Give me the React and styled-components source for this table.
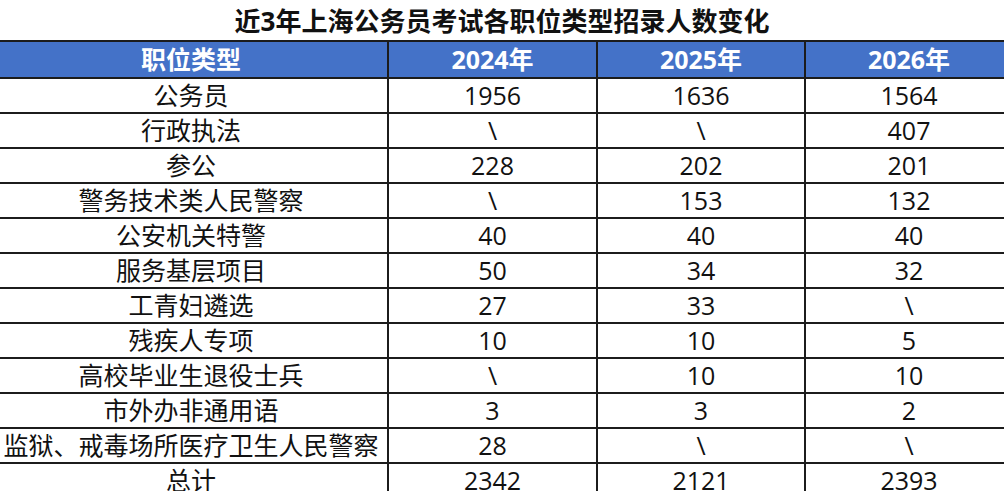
import React from "react";
import styled, { createGlobalStyle } from "styled-components";

const BLUE = "#4472C8";
const LINE = "#1c1c1c";
const FONT = `"Open Sans", "Noto Sans CJK SC", sans-serif`;

const YEARS = ["2024年", "2025年", "2026年"];
const WIDTHS = [394, 209, 208, 208];

const ROWS = [
  ["公务员", "1956", "1636", "1564"],
  ["行政执法", "\\", "\\", "407"],
  ["参公", "228", "202", "201"],
  ["警务技术类人民警察", "\\", "153", "132"],
  ["公安机关特警", "40", "40", "40"],
  ["服务基层项目", "50", "34", "32"],
  ["工青妇遴选", "27", "33", "\\"],
  ["残疾人专项", "10", "10", "5"],
  ["高校毕业生退役士兵", "\\", "10", "10"],
  ["市外办非通用语", "3", "3", "2"],
  ["监狱、戒毒场所医疗卫生人民警察", "28", "\\", "\\"],
  ["总计", "2342", "2121", "2393"],
];

const GlobalStyle = createGlobalStyle`
  html, body {
    margin: 0;
    padding: 0;
    background: #fff;
    overflow: hidden;
  }
  body {
    font-family: ${FONT};
    color: #111;
  }
`;

function App() {
  return (
    <>
      <GlobalStyle />
      <Page>
        <Title>近3年上海公务员考试各职位类型招录人数变化</Title>
        <Table>
          <colgroup>
            {WIDTHS.map((w, i) => (
              <Col key={i} $width={w} />
            ))}
          </colgroup>
          <thead>
            <tr>
              <HeadCell>职位类型</HeadCell>
              {YEARS.map((y) => (
                <HeadCell key={y}>{y}</HeadCell>
              ))}
            </tr>
          </thead>
          <tbody>
            {ROWS.map((row) => (
              <tr key={row[0]}>
                {row.map((cell, i) => (
                  <Cell key={i}>{cell}</Cell>
                ))}
              </tr>
            ))}
          </tbody>
        </Table>
      </Page>
    </>
  );
}

const Page = styled.div`
  width: 1004px;
  height: 491px;
  overflow: hidden;
`;

const Title = styled.h1`
  margin: 0;
  height: 40px;
  display: flex;
  align-items: center;
  justify-content: center;
  font-family: ${FONT};
  font-size: 26px;
  font-weight: 700;
  color: #111;
`;

const Table = styled.table`
  margin-left: -7px;
  width: 1019px;
  table-layout: fixed;
  border-collapse: collapse;
  border: 2px solid ${LINE};
`;

const Col = styled.col`
  width: ${(props) => props.$width}px;
`;

const HeadCell = styled.th`
  height: 35px;
  padding: 0;
  background: ${BLUE};
  color: #fff;
  font-size: 25px;
  font-weight: 700;
  text-align: center;
  line-height: 1;
  border: 2px solid ${LINE};
`;

const Cell = styled.td`
  height: 33px;
  padding: 0;
  font-size: 25px;
  font-weight: 400;
  text-align: center;
  line-height: 1;
  white-space: nowrap;
  border: 2px solid ${LINE};
`;

export default App;
